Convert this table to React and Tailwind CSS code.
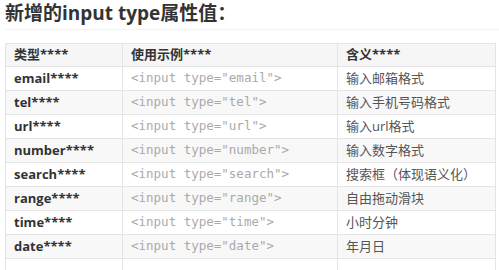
const rows = [
  { type: 'email', meaning: '输入邮箱格式' },
  { type: 'tel', meaning: '输入手机号码格式' },
  { type: 'url', meaning: '输入url格式' },
  { type: 'number', meaning: '输入数字格式' },
  { type: 'search', meaning: '搜索框（体现语义化）' },
  { type: 'range', meaning: '自由拖动滑块' },
  { type: 'time', meaning: '小时分钟' },
  { type: 'date', meaning: '年月日' },
]

const sans = "font-['Open_Sans','Noto_Sans_CJK_SC',sans-serif]"

export default function App() {
  return (
    <div className={`w-[499px] h-[270px] overflow-hidden bg-white text-[#333] ${sans}`}>
      <h2 className="ml-[5px] h-[30px] border-b border-[#f3f3f3] text-[19px] font-bold leading-[26px] text-[#333]">
        新增的input type属性值：
      </h2>
      <table className="ml-[5px] mt-[13px] w-[491px] border-collapse table-fixed text-[13px]">
        <colgroup>
          <col className="w-[117px]" />
          <col className="w-[215px]" />
          <col />
        </colgroup>
        <thead>
          <tr className="h-[23px] bg-[#f6f6f6]">
            <th className="border border-[#e4e4e4] px-2 text-left font-bold">类型****</th>
            <th className="border border-[#e4e4e4] px-2 text-left font-bold">使用示例****</th>
            <th className="border border-[#e4e4e4] px-2 text-left font-bold">含义****</th>
          </tr>
        </thead>
        <tbody>
          {rows.map((r, i) => (
            <tr key={r.type} className={`h-[24px] ${i % 2 ? 'bg-[#f8f8f8]' : 'bg-white'}`}>
              <td className="border border-[#e4e4e4] px-2 font-bold">{r.type}****</td>
              <td className="border border-[#e4e4e4] px-2 font-['DejaVu_Sans_Mono',monospace] text-[12.5px] text-[#aaa]">
                {`<input type="${r.type}">`}
              </td>
              <td className="border border-[#e4e4e4] px-2 text-[#555]">{r.meaning}</td>
            </tr>
          ))}
          <tr className="h-[24px] bg-white">
            <td className="border border-[#e4e4e4]"></td>
            <td className="border border-[#e4e4e4]"></td>
            <td className="border border-[#e4e4e4]"></td>
          </tr>
        </tbody>
      </table>
    </div>
  )
}
